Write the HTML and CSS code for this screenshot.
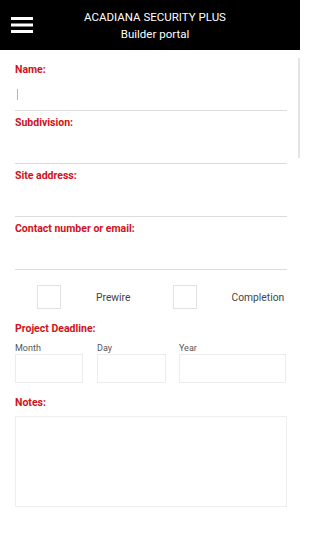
FILE: index.html
```html
<!DOCTYPE html>
<html>
<head>
<meta charset="utf-8">
<link rel="stylesheet" href="styles.css">
</head>
<body>
<header class="bar">
  <svg class="menu" width="22" height="16" viewBox="0 0 22 16">
    <rect x="0" y="0" width="22" height="3" fill="#fff"/>
    <rect x="0" y="6.5" width="22" height="3" fill="#fff"/>
    <rect x="0" y="13" width="22" height="3" fill="#fff"/>
  </svg>
  <div class="title">
    <div>ACADIANA SECURITY PLUS</div>
    <div>Builder portal</div>
  </div>
</header>
<main class="form">
  <div class="field">
    <div class="label">Name:</div>
    <div class="line"><span class="caret"></span></div>
  </div>
  <div class="field">
    <div class="label">Subdivision:</div>
    <div class="line"></div>
  </div>
  <div class="field">
    <div class="label">Site address:</div>
    <div class="line"></div>
  </div>
  <div class="field">
    <div class="label">Contact number or email:</div>
    <div class="line"></div>
  </div>
  <div class="checks">
    <div class="box b1"></div>
    <div class="ctext t1">Prewire</div>
    <div class="box b2"></div>
    <div class="ctext t2">Completion</div>
  </div>
  <div class="label deadline">Project Deadline:</div>
  <div class="dates">
    <div class="date month"><div class="small">Month</div><div class="dbox"></div></div>
    <div class="date day"><div class="small">Day</div><div class="dbox"></div></div>
    <div class="date year"><div class="small">Year</div><div class="dbox"></div></div>
  </div>
  <div class="label notes">Notes:</div>
  <div class="area"></div>
</main>
<div class="scroll"></div>
</body>
</html>
```
FILE: styles.css
```css
html, body {
  margin: 0;
  padding: 0;
  background: #fff;
  font-family: Roboto, "Liberation Sans", Arial, sans-serif;
  width: 300px;
  height: 533px;
  overflow: hidden;
  position: relative;
}
.bar {
  height: 50px;
  background: #000;
  display: flex;
  align-items: center;
  position: relative;
}
.menu {
  margin-left: 11px;
  margin-top: -1px;
}
.title {
  position: absolute;
  left: 0;
  right: 0;
  top: 9px;
  text-align: center;
  color: #fff;
  font-size: 11.5px;
  line-height: 17px;
  padding-left: 10px;
}
.form {
  padding: 0 13px 0 15px;
}
.field {
  height: 48px;
  margin-bottom: 5px;
  display: flex;
  flex-direction: column;
}
.field:first-child {
  margin-top: 13px;
}
.label {
  color: #d01120;
  font-weight: bold;
  font-size: 10.5px;
  line-height: 13px;
}
.line {
  margin-top: auto;
  border-bottom: 1px solid #dcdcdc;
  height: 22px;
  position: relative;
}
.caret {
  position: absolute;
  left: 2px;
  top: 1px;
  width: 1px;
  height: 11px;
  background: #7fcfc0;
}
.checks {
  display: flex;
  align-items: center;
  height: 24px;
  margin-top: 15px;
  color: #444;
  font-size: 10.3px;
}
.box {
  width: 22px;
  height: 22px;
  border: 1px solid #e2e2e2;
}
.b1 { margin-left: 22px; }
.t1 { margin-left: 35px; }
.b2 { margin-left: 43px; }
.t2 { margin-left: 34px; }
.deadline {
  margin-top: 13px;
}
.dates {
  display: flex;
  margin-top: 8px;
}
.date {
  display: flex;
  flex-direction: column;
}
.small {
  color: #555;
  font-size: 9px;
  line-height: 11px;
  height: 11px;
}
.dbox {
  height: 27px;
  border: 1px solid #ececec;
}
.month { width: 68px; }
.day { width: 69px; margin-left: 14px; }
.year { width: 107px; margin-left: 13px; }
.notes {
  margin-top: 13px;
}
.area {
  margin-top: 7px;
  height: 89px;
  border: 1px solid #eeeeee;
}
.scroll {
  position: absolute;
  right: 0;
  top: 58px;
  width: 2px;
  height: 100px;
  background: #e4e4e4;
}
```
